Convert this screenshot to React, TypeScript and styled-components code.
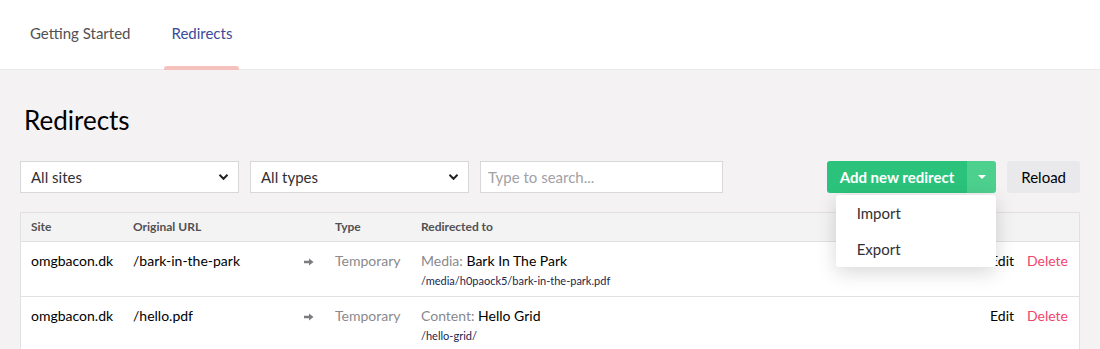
import React from "react";
import styled, { createGlobalStyle } from "styled-components";

const GlobalStyle = createGlobalStyle`
  html, body {
    margin: 0;
    padding: 0;
    background: #f4f2f3;
    font-family: Lato, "Open Sans", sans-serif;
    color: #1b264f;
  }
  * { box-sizing: border-box; }
`;

const TabBar = styled.div`
  height: 70px;
  background: #fff;
  border-bottom: 1px solid #e9e9eb;
  display: flex;
  padding-left: 14px;
`;

const Tab = styled.div<{ active?: boolean }>`
  position: relative;
  padding: 0 16px;
  display: flex;
  align-items: center;
  font-size: 15px;
  color: ${(p) => (p.active ? "#3a4a9c" : "#515054")};
  margin-right: 9px;
  padding-bottom: 3px;
  &::after {
    content: "";
    display: ${(p) => (p.active ? "block" : "none")};
    position: absolute;
    left: 9px;
    right: 9px;
    bottom: -1px;
    height: 4px;
    border-radius: 3px 3px 0 0;
    background: #f5c1bc;
  }
`;

const Content = styled.div`
  padding: 33px 20px 0 20px;
`;

const Title = styled.h1`
  margin: 0 0 24px 4px;
  font-size: 26px;
  font-weight: 400;
  color: #000;
  line-height: 34px;
`;

const Toolbar = styled.div`
  display: flex;
  align-items: center;
  gap: 11px;
  height: 32px;
`;

const SelectBox = styled.div<{ w: number }>`
  width: ${(p) => p.w}px;
  height: 32px;
  background: #fff;
  border: 1px solid #d8d7d9;
  display: flex;
  align-items: center;
  justify-content: space-between;
  padding: 0 9px 0 10px;
  font-size: 15px;
  color: #303033;
`;

const SearchBox = styled.div`
  width: 243px;
  height: 32px;
  background: #fff;
  border: 1px solid #d8d7d9;
  display: flex;
  align-items: center;
  padding: 0 7px;
  font-size: 15px;
  color: #a2a1a6;
`;

const Spacer = styled.div`
  flex: 1;
`;

const ButtonGroup = styled.div`
  position: relative;
  display: flex;
  height: 32px;
`;

const GreenButton = styled.div`
  background: #2bc37c;
  color: #fff;
  font-weight: 700;
  font-size: 15px;
  display: flex;
  align-items: center;
  padding: 0 13px;
  border-radius: 3px 0 0 3px;
  height: 32px;
`;

const CaretButton = styled.div`
  background: #4dd08e;
  width: 29px;
  height: 32px;
  border-radius: 0 3px 3px 0;
  display: flex;
  align-items: center;
  justify-content: center;
`;

const Caret = styled.div`
  width: 0;
  height: 0;
  border-left: 4px solid transparent;
  border-right: 4px solid transparent;
  border-top: 4px solid #fff;
`;

const GrayButton = styled.div`
  background: #e9e9eb;
  color: #000;
  font-size: 15px;
  height: 32px;
  display: flex;
  align-items: center;
  padding: 0 14px;
  border-radius: 3px;
`;

const Menu = styled.div`
  position: absolute;
  top: 34px;
  left: 9px;
  width: 160px;
  background: #fff;
  border-radius: 3px;
  box-shadow: 0 5px 20px rgba(0, 0, 0, 0.16);
  z-index: 5;
`;

const MenuItem = styled.div`
  height: 36px;
  display: flex;
  align-items: center;
  padding-left: 21px;
  font-size: 15px;
  color: #303033;
`;

const Table = styled.div`
  margin-top: 19px;
  border: 1px solid #e1e0e2;
  background: #fff;
`;

const Row = styled.div<{ head?: boolean }>`
  display: grid;
  grid-template-columns: 102px 171px 31px 86px 1fr 120px;
  padding-left: 10px;
  align-items: ${(p) => (p.head ? "center" : "start")};
  height: ${(p) => (p.head ? "29px" : "55px")};
  background: ${(p) => (p.head ? "#f3f3f3" : "#fff")};
  border-bottom: 1px solid #e1e0e2;
  font-size: ${(p) => (p.head ? "12px" : "14px")};
  font-weight: ${(p) => (p.head ? 700 : 400)};
  color: ${(p) => (p.head ? "#515054" : "#000")};
  padding-top: ${(p) => (p.head ? "0" : "9px")};
`;

const Cell = styled.div`
  line-height: 20px;
`;

const Muted = styled.span`
  color: #8a898e;
`;

const SmallUrl = styled.div`
  font-size: 11px;
  color: #1b264f;
  margin-top: 3px;
  line-height: 14px;
`;

const Arrow = styled.div`
  line-height: 20px;
`;

const Actions = styled.div`
  display: flex;
  justify-content: flex-end;
  gap: 13px;
  padding-right: 11px;
  line-height: 20px;
`;

const Danger = styled.span`
  color: #f0446c;
`;

const Chevron = () => (
  <svg width="11" height="8" viewBox="0 0 11 8">
    <path d="M1.5 1.8 L5.5 5.8 L9.5 1.8" fill="none" stroke="#222" strokeWidth="2" />
  </svg>
);

const ArrowIcon = () => (
  <svg width="10" height="8" viewBox="0 0 10 8">
    <path d="M0 2.8 H5 V0.5 L9.5 4 L5 7.5 V5.2 H0 Z" fill="#7c7b80" />
  </svg>
);

const rows = [
  {
    site: "omgbacon.dk",
    url: "/bark-in-the-park",
    kind: "Media",
    name: "Bark In The Park",
    dest: "/media/h0paock5/bark-in-the-park.pdf",
  },
  {
    site: "omgbacon.dk",
    url: "/hello.pdf",
    kind: "Content",
    name: "Hello Grid",
    dest: "/hello-grid/",
  },
];

export default function App() {
  return (
    <>
      <GlobalStyle />
      <TabBar>
        <Tab>Getting Started</Tab>
        <Tab active>Redirects</Tab>
      </TabBar>
      <Content>
        <Title>Redirects</Title>
        <Toolbar>
          <SelectBox w={219}>
            All sites <Chevron />
          </SelectBox>
          <SelectBox w={219}>
            All types <Chevron />
          </SelectBox>
          <SearchBox>Type to search...</SearchBox>
          <Spacer />
          <ButtonGroup>
            <GreenButton>Add new redirect</GreenButton>
            <CaretButton>
              <Caret />
            </CaretButton>
            <Menu>
              <MenuItem>Import</MenuItem>
              <MenuItem>Export</MenuItem>
            </Menu>
          </ButtonGroup>
          <GrayButton>Reload</GrayButton>
        </Toolbar>
        <Table>
          <Row head>
            <Cell>Site</Cell>
            <Cell>Original URL</Cell>
            <Cell />
            <Cell>Type</Cell>
            <Cell>Redirected to</Cell>
            <Cell />
          </Row>
          {rows.map((r) => (
            <Row key={r.url}>
              <Cell>{r.site}</Cell>
              <Cell>{r.url}</Cell>
              <Arrow>
                <ArrowIcon />
              </Arrow>
              <Cell>
                <Muted>Temporary</Muted>
              </Cell>
              <Cell>
                <Muted>{r.kind}:</Muted> {r.name}
                <SmallUrl>{r.dest}</SmallUrl>
              </Cell>
              <Actions>
                <span>Edit</span>
                <Danger>Delete</Danger>
              </Actions>
            </Row>
          ))}
        </Table>
      </Content>
    </>
  );
}
